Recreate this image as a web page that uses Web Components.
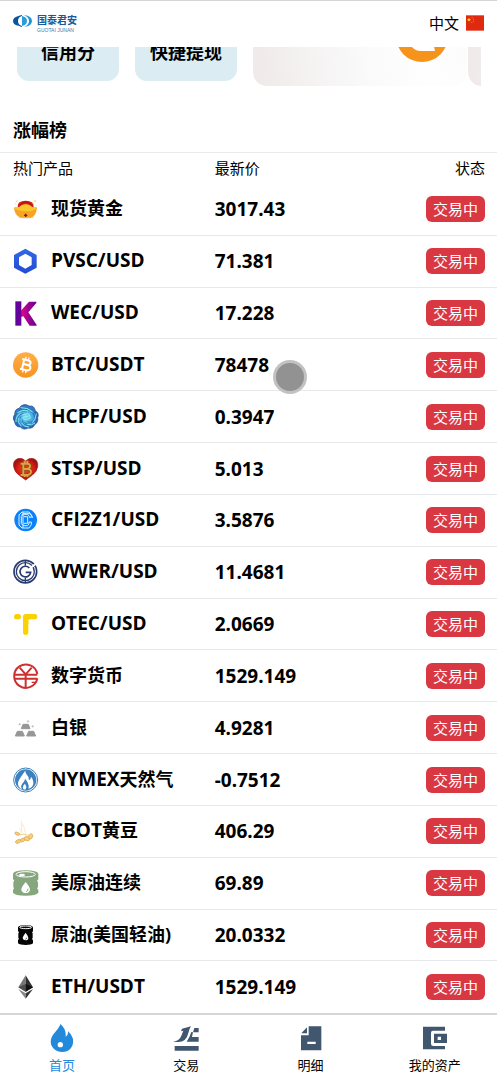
<!DOCTYPE html>
<html lang="zh-CN">
<head>
<meta charset="UTF-8">
<meta name="viewport" content="width=device-width, initial-scale=1.0">
<title>国泰君安</title>
<style>
  body {
    margin: 0;
    background: #fff;
    color: #000;
    font-family: "Open Sans", "Noto Sans CJK SC", sans-serif;
  }
</style>
</head>
<body>
<market-app></market-app>

<script>
const icons = {
  gold: `
    <ellipse cx="39" cy="64" rx="25" ry="4" fill="#e4e4e4"/>
    <path d="M14 33Q13 14 38 14T62 33Z" fill="#d61d16"/>
    <path d="M22 27Q37 8 55 27" fill="none" stroke="#a90e12" stroke-width="3"/>
    <path d="M3 35Q8 31 18 34Q26 25 38 25T58 34Q67 31 72 35Q69 61 53 65H23Q5 59 3 35Z" fill="#f6a326"/>
    <path d="M3 35Q8 31 18 34Q26 25 38 25T58 34Q67 31 72 35Q63 47 38 46T3 35Z" fill="#fbc72d"/>
    <path d="M38 53v10M33 58h10" stroke="#742216" stroke-width="4"/>
    <path d="M12 13v6M9 16h6M66 11v8M62 15h8M7 20v4M59 18v4" stroke="#f8d45c" stroke-width="2"/>`,
  hexagon: `
    <linearGradient id="hex" x2="0" y2="1"><stop stop-color="#3268e5"/><stop offset="1" stop-color="#244bd2"/></linearGradient>
    <path fill="url(#hex)" fill-rule="evenodd" d="M37 2L71 21V59L37 77L3 59V21ZM37 17L18 28V51L37 62L56 51V28Z"/>`,
  k: `
    <linearGradient id="kArm" x2="1"><stop stop-color="#ee078b"/><stop offset=".45" stop-color="#a60190"/><stop offset="1" stop-color="#650098"/></linearGradient>
    <path d="M22 34L48 5H70V9L46 37L71 75V77H50L31 49L22 52Z" fill="url(#kArm)"/>
    <path d="M7 4H25V77H7Z" fill="#64039b"/>`,
  btc: `
    <linearGradient id="btc" x2="0" y2="1"><stop stop-color="#ffae4a"/><stop offset="1" stop-color="#f7931e"/></linearGradient>
    <circle cx="38" cy="39" r="38" fill="url(#btc)"/>
    <g transform="rotate(13 39 39)" fill="none" stroke="#fff" stroke-width="6">
      <path d="M24 24H41Q51 24 51 31T41 38H31M31 38H43Q54 38 54 46T43 54H24M30 24V54"/>
      <path d="M34 15V25M43 15V25M34 53V63M43 53V63" stroke-width="4"/>
    </g>`,
  knot: `
    <radialGradient id="knot"><stop stop-color="#7de3ee"/><stop offset=".6" stop-color="#3fa6e0"/><stop offset="1" stop-color="#2b62b4"/></radialGradient>
    <path d="M25 5Q37-3 49 6Q64 4 67 20Q80 28 74 41Q77 55 65 62Q59 75 45 72Q32 80 22 69Q7 69 5 54Q-4 42 5 31Q5 15 18 13Z" fill="url(#knot)" stroke="#275089" stroke-width="2"/>
    <g fill="none" stroke="#245c9e" stroke-width="2">
      <path d="M19 15Q41 4 60 19Q71 30 72 41M10 29Q21 11 44 17Q62 23 66 42M5 52Q2 34 17 24Q29 17 42 24M21 69Q6 58 12 43Q17 30 32 28M43 73Q25 72 19 57Q17 45 24 37M65 61Q50 73 34 61Q27 55 29 48M72 42Q70 58 54 62Q42 63 35 55M67 21Q73 43 60 52Q51 58 43 53"/>
    </g>
    <g fill="none" stroke="#8ceaf1" stroke-width="3">
      <path d="M23 11Q43 9 59 24M13 26Q28 15 45 21M9 54Q8 37 22 28M25 67Q13 57 18 42M48 69Q32 69 26 57M66 57Q55 66 43 61M70 29Q68 48 58 56"/>
      <path d="M28 32L47 29L53 42L35 48L30 40L48 36"/>
    </g>`,
  heart: `
    <radialGradient id="heart"><stop stop-color="#f04b24"/><stop offset=".7" stop-color="#d91914"/><stop offset="1" stop-color="#9c1412"/></radialGradient>
    <path d="M38 15Q28 4 14 8Q-1 14 2 32Q4 48 20 59L38 72L57 58Q72 47 74 32Q76 13 62 8Q48 4 38 15Z" fill="url(#heart)" stroke="#a21b16" stroke-width="2"/>
    <g fill="none" stroke="#794516" stroke-width="9"><path d="M23 23H42Q52 24 51 31T41 39H30M31 39H43Q55 40 54 48T43 57H23M31 23V57"/></g>
    <g fill="none" stroke="#d9a545" stroke-width="6"><path d="M23 23H42Q52 24 51 31T41 39H30M31 39H43Q55 40 54 48T43 57H23M31 23V57M35 14V24M43 14V24M35 56V63M43 56V63"/></g>`,
  coin: `
    <circle cx="38" cy="39" r="34" fill="#0b82fa"/>
    <g fill="none" stroke="#d9f2ff" stroke-width="3">
      <path d="M55 24L48 15H27L18 24V54L27 63H48L55 53V45H48V51L43 56H31L25 50V28L31 22H44L49 28V31H55Z"/>
      <path d="M30 15V63M32 29H44V49H32M25 25L31 20H51L58 28V33"/>
    </g>`,
  ring: `
    <g fill="none" stroke="#293c70">
      <circle cx="37" cy="38" r="34" stroke-width="5"/>
      <circle cx="37" cy="38" r="27" stroke-width="4"/>
      <path d="M37 4V20M37 56V72" stroke-width="4"/>
    </g>
    <path d="M50 28L72 12" stroke="#fff" stroke-width="6"/>
    <path d="M49 27A16 16 0 1 0 53 40H38" fill="none" stroke="#293c70" stroke-width="5"/>`,
  tee: `
    <path d="M11 17H16M38 64V23Q38 17 44 17H65" fill="none" stroke="#fad202" stroke-width="16" stroke-linecap="round"/>
    <path d="M30 15Q31 9 38 9H52V25H46V39H30Z" fill="#fad202"/>`,
  yuan: `
    <g fill="none" stroke="#cc302f" stroke-width="6">
      <path d="M73 46A35 35 0 1 1 73 33"/>
      <path d="M20 14L38 34L56 14M5 35H24M52 35H73M24 35H52M5 47H73M38 34V73"/>
      <path d="M56 58H70" stroke-width="4"/>
    </g>`,
  silver: `
    <g fill="#979797" stroke="#979797" stroke-width="3" stroke-linejoin="round">
      <path d="M30 28H46L51 41H25ZM13 49H28L34 63H7ZM47 49H62L68 63H41Z"/>
    </g>
    <path d="M45 15V23M41 19H49M20 24V31M16 28H24M59 30V38M55 34H63" stroke="#b5b5b5" stroke-width="2"/>`,
  gas: `
    <circle cx="38" cy="39" r="36" fill="#fff" stroke="#3c80b8" stroke-width="3"/>
    <circle cx="38" cy="39" r="32" fill="#3c82c0"/>
    <path d="M37 10C30 23 17 37 15 48Q14 61 28 68Q22 56 30 48Q37 42 36 36Q49 50 46 66Q63 60 61 45Q60 35 54 29Q54 36 48 40Q47 27 40 21Q36 17 37 10Z" fill="#fff"/>
    <path d="M28 68Q21 57 30 48Q37 42 36 36Q49 49 46 66Q37 70 28 68Z" fill="#3c82c0"/>
    <path d="M36 50Q42 58 38 67Q34 69 31 66Q27 58 36 50Z" fill="#fff"/>`,
  soy: `
    <path d="M25 8Q25 28 27 43M28 17Q35 29 39 50M18 31Q26 35 25 45" fill="none" stroke="#f8edc8" stroke-width="3"/>
    <g fill="#f7ce70" stroke="#dba44e" stroke-width="2">
      <ellipse cx="13" cy="47" rx="8" ry="4" transform="rotate(22 13 47)"/>
      <ellipse cx="16" cy="70" rx="9" ry="5" transform="rotate(-25 16 70)"/>
      <ellipse cx="29" cy="66" rx="7" ry="5" transform="rotate(-30 29 66)"/>
      <ellipse cx="42" cy="62" rx="9" ry="6" transform="rotate(10 42 62)"/>
      <ellipse cx="53" cy="55" rx="8" ry="6" transform="rotate(-65 53 55)"/>
    </g>
    <path d="M21 50Q33 46 43 52L53 49" fill="none" stroke="#eed391" stroke-width="3"/>`,
  barrel: `
    <path d="M0 11Q2 2 37 1Q74 2 76 11V28L72 32L75 37V51L72 55L76 60V68Q70 77 38 77T0 68V60L3 55L1 50V36L4 32L0 27Z" fill="#86a77d"/>
    <ellipse cx="38" cy="13" rx="29" ry="8" fill="none" stroke="#fff" stroke-width="3"/>
    <ellipse cx="27" cy="15" rx="9" ry="4" fill="#fff"/>
    <path d="M38 36Q24 53 25 59Q27 69 38 69T51 59Q51 51 38 36Z" fill="#fff"/>
    <path d="M45 56Q46 63 39 65" fill="none" stroke="#86a77d" stroke-width="3"/>`,
  crude: `
    <path d="M15 15Q20 9 38 9T60 15V28L57 31L59 34V48L57 51L60 55V64Q55 69 38 69T15 64V54L18 51L16 48V34L18 31L15 27Z" fill="#050505"/>
    <ellipse cx="38" cy="16" rx="18" ry="4" fill="none" stroke="#fff" stroke-width="3"/>
    <path d="M38 32Q29 43 29 48Q30 55 38 55T46 48Q46 43 38 32Z" fill="#fff"/>
    <path d="M41 47Q41 51 37 52" fill="none" stroke="#111" stroke-width="2"/>`,
  eth: `
    <path d="M38 4L16 40L38 53Z" fill="#777"/>
    <path d="M38 4L60 40L38 53Z" fill="#303030"/>
    <path d="M38 30L16 40L38 53Z" fill="#4e4e4e"/>
    <path d="M38 30L60 40L38 53Z" fill="#111"/>
    <path d="M16 45L38 58V74Z" fill="#888"/>
    <path d="M60 45L38 58V74Z" fill="#353535"/>`,
  home: `
    <path fill="#238adb" fill-rule="evenodd" d="M34 0C31 14 15 25 8 40C-2 64 16 84 40 84C64 84 77 63 71 42Q68 31 57 22Q58 34 50 38Q52 14 34 0ZM34 54A8 8 0 1 1 34 70A8 8 0 1 1 34 54Z"/>`,
  trade: `
    <g fill="#41566f">
      <path d="M0 54Q20 50 26 33L31 20L24 22L27 14L54 7Q48 16 46 27Q40 54 16 54Z"/>
      <path d="M64 12H77V25H60ZM55 24L60 25L57 39H77V53H41Q50 40 55 24ZM5 66H77V80H5Z"/>
    </g>`,
  detail: `
    <path fill="#41566f" fill-rule="evenodd" d="M32 7H70V79H9V34H32ZM28 53V60H53V53Z"/>
    <path d="M10 28L27 10V28Z" fill="#41566f"/>`,
  wallet: `
    <path d="M3 8H69V20H33Q27 20 27 26V59Q27 66 34 66H69V76H3Z" fill="#41566f"/>
    <path fill="#41566f" fill-rule="evenodd" d="M36 29H75V57H36ZM47 38V48H57V38Z"/>`
};

const products = [
  ["gold", "现货黄金", "3017.43"],
  ["hexagon", "PVSC/USD", "71.381"],
  ["k", "WEC/USD", "17.228"],
  ["btc", "BTC/USDT", "78478"],
  ["knot", "HCPF/USD", "0.3947"],
  ["heart", "STSP/USD", "5.013"],
  ["coin", "CFI2Z1/USD", "3.5876"],
  ["ring", "WWER/USD", "11.4681"],
  ["tee", "OTEC/USD", "2.0669"],
  ["yuan", "数字货币", "1529.149"],
  ["silver", "白银", "4.9281"],
  ["gas", "NYMEX天然气", "-0.7512"],
  ["soy", "CBOT黄豆", "406.29"],
  ["barrel", "美原油连续", "69.89"],
  ["crude", "原油(美国轻油)", "20.0332"],
  ["eth", "ETH/USDT", "1529.149"]
];

class MarketIcon extends HTMLElement {
  constructor() {
    super();
    this.shadowDOM = this.attachShadow({ mode: "open" });
  }

  connectedCallback() {
    const box = this.hasAttribute("tall") ? "0 0 78 86" : "0 0 78 78";
    this.shadowDOM.innerHTML = `
      <style>
        :host {
          display: block;
          flex: none;
          width: 26px;
        }
        svg {
          display: block;
          width: 100%;
        }
      </style>
      <svg viewBox="${box}" aria-hidden="true">${icons[this.getAttribute("name")]}</svg>
    `;
  }
}

customElements.define("market-icon", MarketIcon);

class AppHeader extends HTMLElement {
  constructor() {
    super();
    this.shadowDOM = this.attachShadow({ mode: "open" });
    this.shadowDOM.innerHTML = `
      <style>
        :host {
          display: flex;
          justify-content: space-between;
          align-items: center;
          box-sizing: border-box;
          height: 47px;
          padding: 0 13px;
          border-top: 1px solid #d8d4d5;
          background: #fff;
        }
        .logo {
          display: block;
          width: 68px;
          height: 26px;
        }
        button {
          display: flex;
          align-items: center;
          gap: 7px;
          padding: 0 0 2px;
          border: 0;
          background: none;
          color: inherit;
          font: 15px/20px "Noto Sans CJK SC", sans-serif;
        }
        .flag {
          width: 18px;
          height: 16px;
        }
      </style>
      <svg class="logo" viewBox="0 -4 68 26" role="img" aria-label="国泰君安">
        <path d="M6 1Q0 2 0 6T6 11Q2 6 6 1Z" fill="#0a549c"/>
        <path d="M9 0Q2 1 3 6T9 12V11Q5 10 5 6T9 1Z" fill="#0a549c"/>
        <path d="M9 1Q14 2 14 6T9 11Z" fill="#2b9bda"/>
        <path d="M11 0Q19 1 19 6T11 12Q16 10 16 6T11 0Z" fill="#2493d5"/>
        <text x="24" y="9" font-family="Noto Sans CJK SC" font-size="10" font-weight="700" fill="#165a99">国泰君安</text>
        <text x="24" y="17" font-family="Liberation Sans" font-size="5" fill="#3f76a8">GUOTAI JUNAN</text>
      </svg>
      <button type="button">
        <span>中文</span>
        <svg class="flag" viewBox="0 0 54 48" aria-hidden="true">
          <path d="M0 1H54V47H0Z" fill="#df2910"/>
          <path d="M9 8L11 12H15L12 15L13 19L9 17L5 19L6 15L3 12H7Z" fill="#ffdc00"/>
          <path d="M17 6h3v3h-3zM21 11h3v3h-3zM21 17h3v3h-3zM16 21h3v3h-3z" fill="#ef8b08"/>
        </svg>
      </button>
    `;
  }
}

customElements.define("app-header", AppHeader);

class QuickCard extends HTMLElement {
  constructor() {
    super();
    this.shadowDOM = this.attachShadow({ mode: "open" });
    this.shadowDOM.innerHTML = `
      <style>
        :host {
          display: block;
          width: 102px;
        }
        button {
          display: block;
          width: 100%;
          padding: 56px 0 18px;
          border: 0;
          border-radius: 12px;
          background: #dbecf3;
          color: inherit;
          font: 700 18px/24px "Noto Sans CJK SC", sans-serif;
        }
      </style>
      <button type="button"><slot></slot></button>
    `;
  }
}

customElements.define("quick-card", QuickCard);

class PromoStrip extends HTMLElement {
  constructor() {
    super();
    this.shadowDOM = this.attachShadow({ mode: "open" });
    this.shadowDOM.innerHTML = `
      <style>
        :host {
          display: flex;
          gap: 1px;
          min-width: 0;
          overflow: hidden;
        }
        .slide {
          display: flex;
          justify-content: flex-end;
          align-items: flex-end;
          box-sizing: border-box;
          flex: 0 0 94%;
          height: 100px;
          padding: 0 19px 24px;
          border-radius: 14px;
          background: linear-gradient(80deg, #efe9e9, #fafafa 50%, #fefefe 75%, #fcfcfc);
        }
        svg {
          width: 52px;
          height: 52px;
        }
      </style>
      <div class="slide">
        <svg viewBox="0 0 52 52" aria-hidden="true">
          <circle cx="26" cy="26" r="26" fill="#f6931b"/>
          <path d="M14 35Q19 41 24 41H39L37 32Z" fill="#fff"/>
        </svg>
      </div>
      <div class="slide"></div>
    `;
  }
}

customElements.define("promo-strip", PromoStrip);

class MarketTable extends HTMLElement {
  constructor() {
    super();
    this.shadowDOM = this.attachShadow({ mode: "open" });
  }

  set products(products) {
    this._products = products;
    this.render();
  }

  render() {
    const rows = this._products.map(([icon, name, price]) => `
      <tr>
        <td>
          <div class="product">
            <market-icon name="${icon}"></market-icon>
            <span class="name">${name.replace(/[A-Z0-9/]+/, "<b>$&</b>")}</span>
          </div>
        </td>
        <td class="price">${price}</td>
        <td><span class="badge">交易中</span></td>
      </tr>
    `).join("");

    this.shadowDOM.innerHTML = `
      <style>
        :host {
          display: grid;
        }
        table {
          width: 100%;
          height: 100%;
          border-collapse: separate;
          border-spacing: 0;
          table-layout: fixed;
        }
        th {
          height: 31px;
          padding: 0 0 2px;
          box-sizing: border-box;
          font: 400 15px/20px "Noto Sans CJK SC", sans-serif;
          text-align: left;
        }
        td {
          padding: 8px 0;
          border-bottom: 1px solid #e6e8ec;
        }
        tr:last-child td {
          border-bottom-color: transparent;
        }
        th:first-child, td:first-child {
          width: 43%;
          padding-left: 13px;
          box-sizing: border-box;
        }
        th:nth-child(2), td:nth-child(2) {
          padding-left: 1px;
        }
        th:last-child, td:last-child {
          width: 20%;
          padding-right: 12px;
          text-align: right;
          box-sizing: border-box;
        }
        .product {
          display: flex;
          align-items: center;
          gap: 12px;
        }
        .name {
          padding-bottom: 2px;
          font-size: 18px;
          line-height: 26px;
          font-weight: 700;
          white-space: nowrap;
        }
        .name b {
          font-size: 19px;
          font-weight: 700;
        }
        .price {
          font: 700 19px/26px "Noto Sans", sans-serif;
        }
        .badge {
          display: inline-block;
          padding: 0 7px;
          border-radius: 6px;
          background: #d93843;
          color: #fff;
          font: 15px/26px "Noto Sans CJK SC", sans-serif;
          vertical-align: middle;
        }
      </style>
      <table>
        <thead>
          <tr><th scope="col">热门产品</th><th scope="col">最新价</th><th scope="col">状态</th></tr>
        </thead>
        <tbody>${rows}</tbody>
      </table>
    `;
  }
}

customElements.define("market-table", MarketTable);

class TabItem extends HTMLElement {
  constructor() {
    super();
    this.shadowDOM = this.attachShadow({ mode: "open" });
  }

  connectedCallback() {
    this.shadowDOM.innerHTML = `
      <style>
        :host {
          display: block;
          flex: 1;
        }
        a {
          display: flex;
          flex-direction: column;
          align-items: center;
          gap: 3px;
          color: #000;
          font: 13px/18px "Noto Sans CJK SC", sans-serif;
          text-decoration: none;
        }
        :host([active]) a {
          color: #238adb;
        }
      </style>
      <a href="#${this.getAttribute("icon")}">
        <market-icon name="${this.getAttribute("icon")}" tall></market-icon>
        <slot></slot>
      </a>
    `;
  }
}

customElements.define("tab-item", TabItem);

class TouchPoint extends HTMLElement {
  constructor() {
    super();
    this.shadowDOM = this.attachShadow({ mode: "open" });
    this.shadowDOM.innerHTML = `
      <style>
        :host {
          position: absolute;
          left: 273px;
          top: 360px;
          box-sizing: border-box;
          width: 34px;
          height: 34px;
          border: 3px solid #c2c2c2;
          border-radius: 50%;
          background: #929292;
          pointer-events: none;
        }
      </style>
    `;
  }
}

customElements.define("touch-point", TouchPoint);

class MarketApp extends HTMLElement {
  constructor() {
    super();
    this.shadowDOM = this.attachShadow({ mode: "open" });
    this.shadowDOM.innerHTML = `
      <style>
        :host {
          display: flex;
          flex-direction: column;
          min-height: 100vh;
        }
        main {
          display: flex;
          flex-direction: column;
          flex: 1;
        }
        /* only the lower edge of the shortcuts shows under the header */
        .shortcuts {
          display: flex;
          align-items: flex-end;
          gap: 16px;
          height: 39px;
          padding: 0 16px 0 17px;
          overflow: hidden;
        }
        quick-card {
          flex: none;
          margin-bottom: 5px;
        }
        promo-strip {
          flex: 1;
        }
        h2 {
          margin: 0;
          padding: 31px 13px 11px;
          border-bottom: 1px solid #e8eaec;
          font: 700 18px/24px "Noto Sans CJK SC", sans-serif;
        }
        market-table {
          flex: 1;
        }
        nav {
          position: sticky;
          bottom: 0;
          display: flex;
          padding: 9px 0 2px;
          border-top: 2px solid #d6d6d6;
          background: #fff;
        }
      </style>
      <app-header></app-header>
      <main>
        <div class="shortcuts">
          <quick-card>信用分</quick-card>
          <quick-card>快捷提现</quick-card>
          <promo-strip></promo-strip>
        </div>
        <h2>涨幅榜</h2>
        <market-table></market-table>
      </main>
      <nav>
        <tab-item icon="home" active>首页</tab-item>
        <tab-item icon="trade">交易</tab-item>
        <tab-item icon="detail">明细</tab-item>
        <tab-item icon="wallet">我的资产</tab-item>
      </nav>
      <touch-point></touch-point>
    `;
    this.shadowDOM.querySelector("market-table").products = products;
  }
}

customElements.define("market-app", MarketApp);
</script>
</body>
</html>
